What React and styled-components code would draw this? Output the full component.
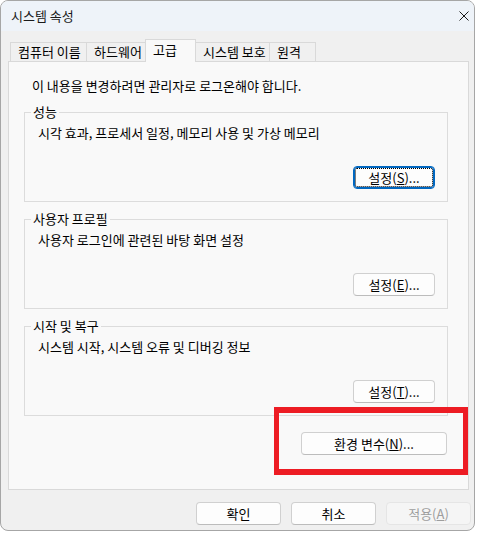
import React from "react";
import styled, { createGlobalStyle } from "styled-components";

const GlobalStyle = createGlobalStyle`
  body {
    margin: 0;
    background: #ffffff;
    font-family: "Noto Sans CJK KR", "Noto Sans", sans-serif;
    font-size: 13px;
    color: #000;
  }
`;

const Window = styled.div`
  position: relative;
  box-sizing: border-box;
  width: 475px;
  height: 531px;
  border: 1px solid #a6a6a6;
  border-radius: 8px;
  background: #f0f0f0;
  display: flex;
  flex-direction: column;
  overflow: hidden;
`;

const TitleBar = styled.div`
  height: 30px;
  flex: none;
  background: #eef3f9;
  display: flex;
  align-items: center;
  justify-content: space-between;
  padding: 0 5px 0 10px;
`;

const Title = styled.span`
  line-height: 16px;
  color: #1a1a1a;
`;

const TabRow = styled.div`
  flex: none;
  display: flex;
  align-items: flex-end;
  padding: 8px 0 0 10px;
  position: relative;
  z-index: 1;
`;

const Tab = styled.div`
  box-sizing: border-box;
  width: ${(p) => p.$w}px;
  height: ${(p) => (p.$active ? 23 : 19)}px;
  margin-left: -1px;
  margin-bottom: ${(p) => (p.$active ? -1 : 0)}px;
  padding: 0 0 ${(p) => (p.$active ? 3 : 0)}px 7px;
  border: 1px solid #d9d9d9;
  border-bottom: none;
  background: ${(p) => (p.$active ? "#f9f9f9" : "#f0f0f0")};
  display: flex;
  align-items: center;
  white-space: nowrap;
  line-height: 16px;
`;

const Panel = styled.div`
  flex: 1;
  box-sizing: border-box;
  width: 461px;
  margin-left: 7px;
  border: 1px solid #d9d9d9;
  background: #f9f9f9;
  padding: 16px 20px 0 15px;
  display: flex;
  flex-direction: column;
`;

const Intro = styled.p`
  margin: 0 0 11px 8px;
  line-height: 16px;
`;

const Group = styled.fieldset`
  margin: 0 0 10px;
  padding: 0;
  min-width: 0;
  border: 1px solid #dcdcdc;
`;

const Legend = styled.legend`
  margin-left: 6px;
  padding: 0 2px;
  line-height: 14px;
`;

const GroupBody = styled.div`
  padding: 6px 12px 12px 13px;
  display: flex;
  flex-direction: column;
`;

const GroupText = styled.div`
  line-height: 16px;
`;

const Button = styled.button`
  box-sizing: border-box;
  width: ${(p) => p.$w}px;
  height: 23px;
  padding: 0;
  border: 1px solid ${(p) => (p.disabled ? "#e5e5e5" : "#d0d0d0")};
  border-bottom-color: ${(p) => (p.disabled ? "#e5e5e5" : "#bcbcbc")};
  border-radius: 4px;
  background: ${(p) => (p.disabled ? "#f5f5f5" : "#fdfdfd")};
  color: ${(p) => (p.disabled ? "#9d9d9d" : "#000")};
  font-family: inherit;
  font-size: 13px;
  line-height: 16px;
  ${(p) =>
    p.$focused &&
    `
    border: 1px solid #0067c0;
    box-shadow: inset 0 0 0 1px #0067c0;
    outline: 1px dotted #000;
    outline-offset: -3px;
  `}
`;

const GroupButton = styled(Button)`
  align-self: flex-end;
  margin-top: 25px;
`;

const EnvButton = styled(Button)`
  align-self: flex-end;
  margin: 6px 1px 0 0;
`;

const Footer = styled.div`
  flex: none;
  height: 40px;
  box-sizing: border-box;
  padding: 12px 3px 0 0;
  display: flex;
  justify-content: flex-end;
  gap: 10px;
`;

const Highlight = styled.div`
  position: absolute;
  left: 273px;
  top: 406px;
  width: 194px;
  height: 68px;
  box-sizing: border-box;
  border: 5px solid #ed1c24;
  border-top-width: 6px;
  border-bottom-width: 6px;
  pointer-events: none;
`;

const CloseIcon = () => (
  <svg width="10" height="10" viewBox="0 0 10 10">
    <path d="M0.5 0.5 L9.5 9.5 M9.5 0.5 L0.5 9.5" stroke="#1a1a1a" strokeWidth="1" />
  </svg>
);

const tabs = [
  { label: "컴퓨터 이름", w: 77 },
  { label: "하드웨어", w: 60 },
  { label: "고급", w: 51, active: true },
  { label: "시스템 보호", w: 75 },
  { label: "원격", w: 47 },
];

const groups = [
  { title: "성능", text: "시각 효과, 프로세서 일정, 메모리 사용 및 가상 메모리", key: "S", focused: true },
  { title: "사용자 프로필", text: "사용자 로그인에 관련된 바탕 화면 설정", key: "E" },
  { title: "시작 및 복구", text: "시스템 시작, 시스템 오류 및 디버깅 정보", key: "T" },
];

export default function App() {
  return (
    <>
      <GlobalStyle />
      <Window>
        <TitleBar>
          <Title>시스템 속성</Title>
          <CloseIcon />
        </TitleBar>
        <TabRow>
          {tabs.map((t) => (
            <Tab key={t.label} $w={t.w} $active={t.active}>
              {t.label}
            </Tab>
          ))}
        </TabRow>
        <Panel>
          <Intro>이 내용을 변경하려면 관리자로 로그온해야 합니다.</Intro>
          {groups.map((g) => (
            <Group key={g.title}>
              <Legend>{g.title}</Legend>
              <GroupBody>
                <GroupText>{g.text}</GroupText>
                <GroupButton $w={82} $focused={g.focused}>
                  설정(<u>{g.key}</u>)...
                </GroupButton>
              </GroupBody>
            </Group>
          ))}
          <EnvButton $w={146}>
            환경 변수(<u>N</u>)...
          </EnvButton>
        </Panel>
        <Footer>
          <Button $w={85}>확인</Button>
          <Button $w={85}>취소</Button>
          <Button $w={85} disabled>
            적용(<u>A</u>)
          </Button>
        </Footer>
        <Highlight />
      </Window>
    </>
  );
}
